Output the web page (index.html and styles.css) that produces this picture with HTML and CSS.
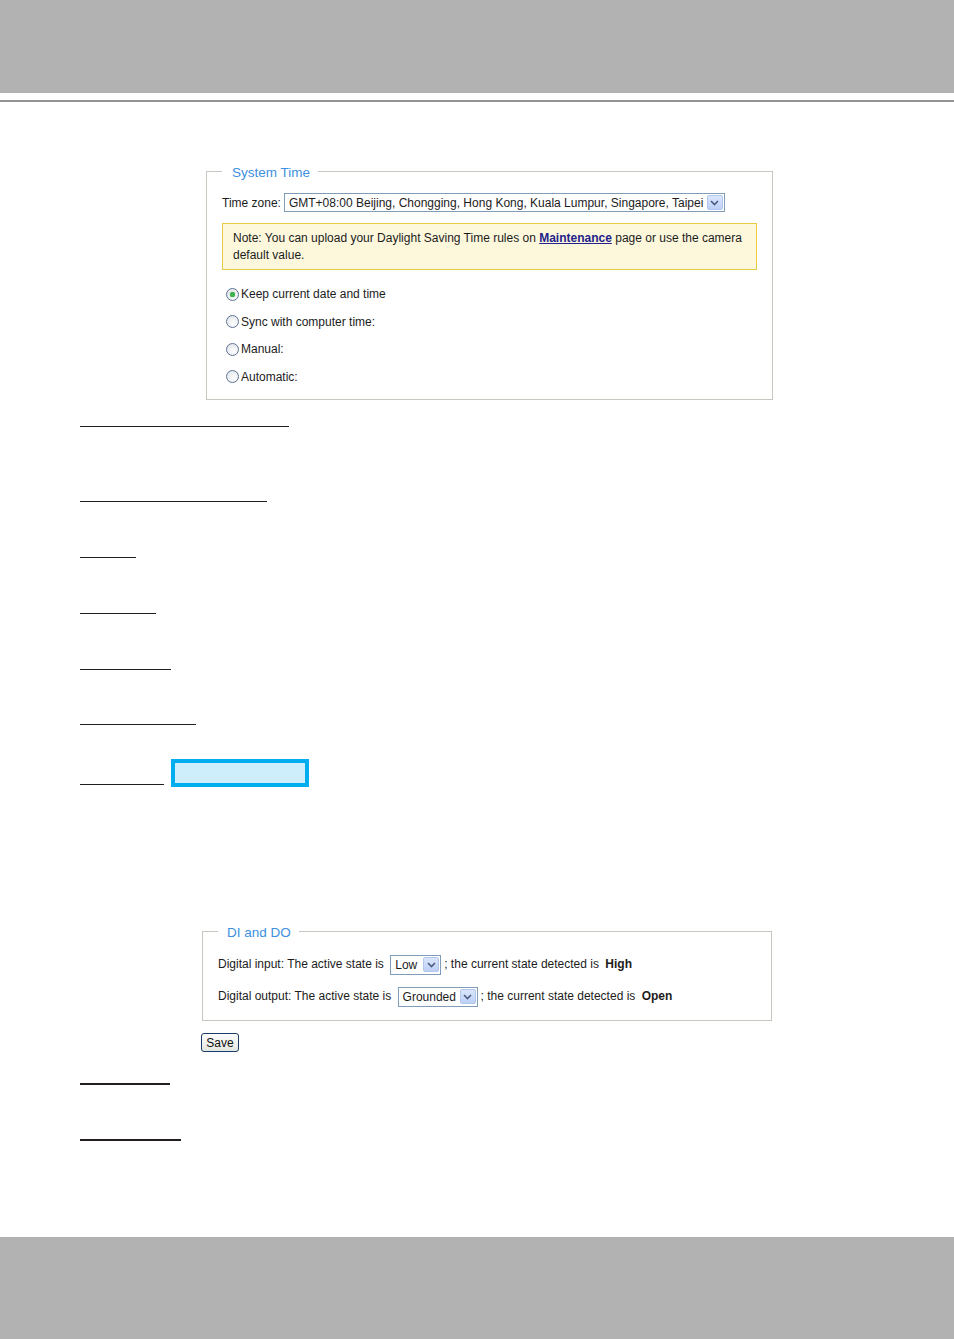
FILE: index.html
```html
<!DOCTYPE html>
<html>
<head>
    <title>System Time - DI and DO</title>
    <link rel="stylesheet" href="styles.css">
</head>
<body>
    <div class="page">
        <div class="top-bar"></div>
        <div class="top-rule"></div>

        <fieldset class="box box-time">
            <legend>System Time</legend>
            <div class="tz-row">
                <span>Time zone:</span>
                <span class="select select-tz">
                    <span class="select-text">GMT+08:00 Beijing, Chongging, Hong Kong, Kuala Lumpur, Singapore, Taipei</span>
                    <span class="select-btn"><svg width="9" height="6" viewBox="0 0 9 6"><path d="M1 1 L4.5 4.5 L8 1" fill="none" stroke="#4a5d80" stroke-width="1.6"/></svg></span>
                </span>
            </div>
            <div class="note">
                Note: You can upload your Daylight Saving Time rules on <a href="#">Maintenance</a> page or use the camera default value.
            </div>
            <div class="radios">
                <label class="radio-row"><span class="radio checked"></span>Keep current date and time</label>
                <label class="radio-row"><span class="radio"></span>Sync with computer time:</label>
                <label class="radio-row"><span class="radio"></span>Manual:</label>
                <label class="radio-row"><span class="radio"></span>Automatic:</label>
            </div>
        </fieldset>

        <div class="rules">
            <div class="rule rule-1"></div>
            <div class="rule rule-2"></div>
            <div class="rule rule-3"></div>
            <div class="rule rule-4"></div>
            <div class="rule rule-5"></div>
            <div class="rule rule-6"></div>
            <div class="rule-row">
                <div class="rule rule-7"></div>
                <div class="highlight"></div>
            </div>
        </div>

        <fieldset class="box box-dido">
            <legend>DI and DO</legend>
            <div class="io-row">Digital input: The active state is <span class="select select-low"><span class="select-text">Low</span><span class="select-btn"><svg width="9" height="6" viewBox="0 0 9 6"><path d="M1 1 L4.5 4.5 L8 1" fill="none" stroke="#4a5d80" stroke-width="1.6"/></svg></span></span>; the current state detected is <b>High</b></div>
            <div class="io-row">Digital output: The active state is <span class="select select-gnd"><span class="select-text">Grounded</span><span class="select-btn"><svg width="9" height="6" viewBox="0 0 9 6"><path d="M1 1 L4.5 4.5 L8 1" fill="none" stroke="#4a5d80" stroke-width="1.6"/></svg></span></span>; the current state detected is <b>Open</b></div>
        </fieldset>
        <button type="button" class="save">Save</button>

        <div class="rules rules-bottom">
            <div class="rule rule-8"></div>
            <div class="rule rule-9"></div>
        </div>

        <div class="bottom-bar"></div>
    </div>
</body>
</html>
```

FILE: styles.css
```css
body {
    margin: 0;
    background: #fff;
    font-family: "Liberation Sans", Arial, sans-serif;
    color: #1c1c1c;
}

.page {
    min-height: 1339px;
    display: flex;
    flex-direction: column;
    align-items: flex-start;
}

.top-bar {
    align-self: stretch;
    height: 93px;
    background: #b2b2b2;
}

.top-rule {
    align-self: stretch;
    height: 2px;
    margin-top: 7px;
    background: #939393;
}

/* fieldsets */
.box {
    box-sizing: border-box;
    margin: 0;
    border: 1px solid #c9c6bf;
    min-width: 0;
}

.box legend {
    font-size: 13.5px;
    line-height: 16px;
    padding-top: 3px;
    color: #3d8fe0;
}

.box-time {
    width: 567px;
    margin-top: 60px;
    margin-left: 206px;
    padding: 12px 15px 12px 15px;
    font-size: 12px;
}

.box-time legend {
    padding-left: 10px;
    padding-right: 8px;
}

.tz-row {
    display: flex;
    align-items: center;
    gap: 3px;
}

.select {
    box-sizing: border-box;
    display: inline-flex;
    align-items: center;
    justify-content: space-between;
    height: 19px;
    border: 1px solid #7f9db9;
    background: #fff;
    padding: 0 1px 0 4px;
    vertical-align: middle;
}

.select-btn {
    box-sizing: border-box;
    width: 16px;
    height: 15px;
    display: flex;
    align-items: center;
    justify-content: center;
    border: 1px solid #b3c6ee;
    border-radius: 2px;
    background: linear-gradient(#dbe6fc, #bcd0f7);
}

.select-tz {
    width: 441px;
}

.note {
    box-sizing: border-box;
    width: 535px;
    margin-top: 11px;
    padding: 6px 10px 5px 10px;
    line-height: 17px;
    background: #fdf8dc;
    border: 1px solid #e8cb45;
}

.note a {
    color: #22228a;
    font-weight: bold;
}

.radios {
    margin-top: 14px;
    display: flex;
    flex-direction: column;
    gap: 7.5px;
}

.radio-row {
    display: flex;
    align-items: center;
    height: 20px;
    padding-left: 4px;
}

.radio {
    box-sizing: border-box;
    width: 13px;
    height: 13px;
    margin-right: 2px;
    border: 1px solid #5e7496;
    border-radius: 50%;
    background: radial-gradient(circle at 60% 65%, #fff, #dcdfe4);
    display: flex;
    align-items: center;
    justify-content: center;
}

.radio.checked::after {
    content: "";
    width: 5px;
    height: 5px;
    border-radius: 50%;
    background: #3fb34f;
    box-shadow: 0 0 1px #2d8a3a;
}

/* hidden headings, only their underlines remain */
.rules {
    margin-left: 80px;
    display: flex;
    flex-direction: column;
    align-items: flex-start;
}

.rule {
    height: 1.5px;
    background: #231f20;
}

.rule-1 { width: 209px; margin-top: 26px; }
.rule-2 { width: 187px; margin-top: 73.5px; }
.rule-3 { width: 56px; margin-top: 54.5px; }
.rule-4 { width: 76px; margin-top: 54.5px; }
.rule-5 { width: 91px; margin-top: 54.5px; }
.rule-6 { width: 116px; margin-top: 53.5px; }

.rule-row {
    display: flex;
    align-items: flex-end;
    gap: 7px;
    margin-top: 34px;
}

.rule-7 {
    width: 84px;
    margin-bottom: 2px;
}

.highlight {
    box-sizing: border-box;
    width: 138px;
    height: 28px;
    border: 4px solid #00aeef;
    background: #cdeefa;
}

.box-dido {
    width: 570px;
    margin-top: 135px;
    margin-left: 202px;
    padding: 13px 15px 14px 15px;
    font-size: 12px;
}

.box-dido legend {
    padding-left: 9px;
    padding-right: 8px;
}

.io-row {
    height: 20px;
    line-height: 20px;
    white-space: nowrap;
}

.io-row + .io-row {
    margin-top: 12px;
}

.io-row b {
    margin-left: 3px;
}

.select-low,
.select-gnd {
    height: 20px;
    margin: 0 3px 0 3px;
    padding-left: 4px;
}

.select-low {
    width: 51px;
}

.select-gnd {
    width: 80px;
}

.save {
    display: block;
    margin: 12px 0 0 201px;
    width: 38px;
    height: 19px;
    padding: 0;
    font-family: "Liberation Sans", Arial, sans-serif;
    font-size: 12px;
    color: #111;
    border: 1px solid #1c3c6c;
    border-radius: 3px;
    background: linear-gradient(#fdfdfd, #e6e6e0);
}

.rules-bottom .rule {
    height: 2px;
}

.rule-8 { width: 90px; margin-top: 31px; }
.rule-9 { width: 101px; margin-top: 54px; }

.bottom-bar {
    align-self: stretch;
    height: 102px;
    margin-top: auto;
    background: #b2b2b2;
}
```
